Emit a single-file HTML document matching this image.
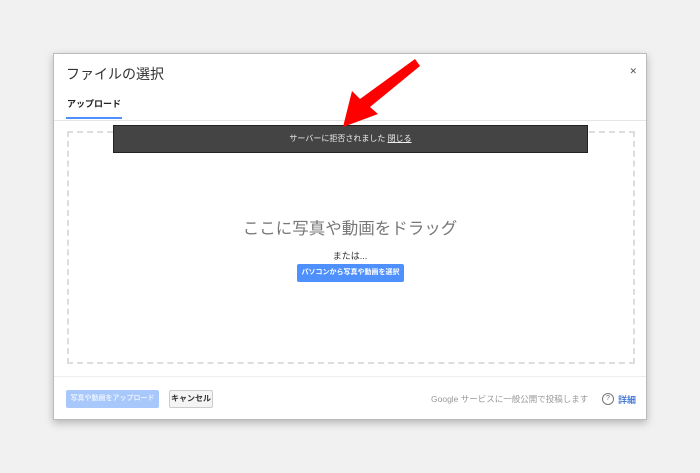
<!DOCTYPE html>
<html><head><meta charset="utf-8"><style>
body{margin:0;width:700px;height:473px;background:#f1f1f1;position:relative;overflow:hidden;font-family:"Liberation Sans","Noto Sans CJK JP",sans-serif}
.dlg{position:absolute;left:53px;top:53px;width:594px;height:367px;background:#fff;border:1px solid #bbb;box-shadow:0 3px 8px rgba(0,0,0,.25);box-sizing:border-box}
.t{position:absolute;left:12px;top:10px;font-size:14px;color:#333}
.x{position:absolute;right:9px;top:12px;font-size:9px;color:#555}
.tab{position:absolute;left:13px;top:43px;font-size:9px;font-weight:bold;color:#222}
.ul{position:absolute;left:12px;top:63px;width:56px;height:2px;background:#4d90fe}
.sep{position:absolute;left:0;right:0;top:66px;height:1px;background:#e5e5e5}
.dash{position:absolute;left:13px;top:77px;width:568px;height:233px;border:2px dashed #ddd;box-sizing:border-box}
.bar{position:absolute;left:59px;top:71px;width:475px;height:28px;background:#444;border:1px solid #222;box-sizing:border-box;color:#eee;font-size:8px;text-align:center;line-height:26px}
.big{position:absolute;left:0;right:0;top:161px;text-align:center;font-size:16.5px;color:#777}
.or{position:absolute;left:0;right:0;top:195px;text-align:center;font-size:9px;color:#333}
.sel{position:absolute;left:243px;top:210px;width:107px;height:18px;background:#4d90fe;color:#fff;font-size:7px;font-weight:bold;text-align:center;line-height:18px;border-radius:2px;white-space:nowrap}
.fsep{position:absolute;left:0;right:0;top:322px;height:1px;background:#eee}
.b1{position:absolute;left:12px;top:336px;width:93px;height:18px;background:#a8c8fb;color:#e8f0fe;font-size:7px;font-weight:bold;text-align:center;line-height:18px;border-radius:2px;white-space:nowrap}
.b2{position:absolute;left:115px;top:336px;width:44px;height:18px;background:#f4f4f4;border:1px solid #ccc;box-sizing:border-box;color:#333;font-size:8px;font-weight:bold;text-align:center;line-height:16px;border-radius:2px}
.info{position:absolute;left:377px;top:339px;font-size:8.5px;color:#999}
.q{position:absolute;left:548px;top:339px;width:10px;height:10px;border:1px solid #777;border-radius:50%;font-size:7px;text-align:center;line-height:10px;color:#666}
.det{position:absolute;left:564px;top:339px;font-size:9px;color:#4d7fd8;font-weight:bold}
</style></head><body>
<div class="dlg">
<div class="t">ファイルの選択</div><div class="x">✕</div>
<div class="tab">アップロード</div><div class="ul"></div><div class="sep"></div>
<div class="dash"></div>
<div class="big">ここに写真や動画をドラッグ</div>
<div class="or">または...</div>
<div class="sel">パソコンから写真や動画を選択</div>
<div class="bar">サーバーに拒否されました <u>閉じる</u></div>
<div class="fsep"></div>
<div class="b1">写真や動画をアップロード</div>
<div class="b2">キャンセル</div>
<div class="info">Google サービスに一般公開で投稿します</div>
<div class="q">?</div><div class="det">詳細</div>
</div>
<svg style="position:absolute;left:0;top:0" width="700" height="473"><polygon points="415,59 420,66 370,107 378,114 343,127 352,91 360,99" fill="#f00"/></svg>
</body></html>
